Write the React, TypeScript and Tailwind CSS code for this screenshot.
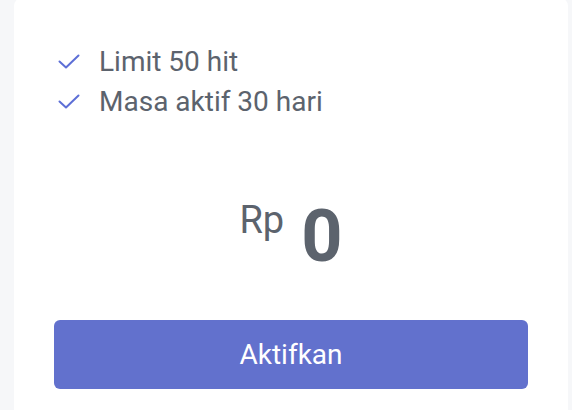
const features = ['Limit 50 hit', 'Masa aktif 30 hari'];

function CheckMark() {
  return (
    <svg width="22" height="16" viewBox="0 0 22 16" fill="none" className="shrink-0">
      <path d="M1.5 7.5 8 13.5 20.5 1.5" stroke="#5d6fd6" strokeWidth="2" strokeLinecap="round" strokeLinejoin="round" />
    </svg>
  );
}

export default function App() {
  return (
    <div className="min-h-[410px] w-[572px] overflow-hidden bg-[#f6f7f9] pl-[14px] pr-[4px] font-['Roboto',sans-serif]">
      <div className="h-[420px] -mt-[2px] rounded-lg bg-white px-[40px] pt-[44px]">
        <ul className="flex flex-col">
          {features.map((f) => (
            <li key={f} className="flex h-[40px] items-center gap-[19px] pl-[4px] text-[28px] text-[#5c636d]">
              <CheckMark />
              <span>{f}</span>
            </li>
          ))}
        </ul>

        <div className="mt-[79px] flex items-start justify-center gap-[17px] text-[#5c636d]">
          <span className="text-[38px] leading-none">Rp</span>
          <span className="text-[72px] font-bold leading-none">0</span>
        </div>

        <button className="mt-[47px] flex h-[69px] w-full items-center justify-center rounded-md bg-[#6271cd] text-[28px] text-white">
          Aktifkan
        </button>
      </div>
    </div>
  );
}
